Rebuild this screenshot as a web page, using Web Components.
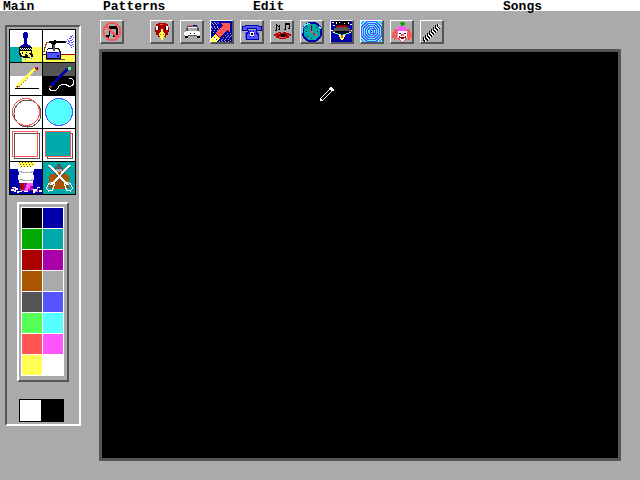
<!DOCTYPE html>
<html lang="en">
<head>
<meta charset="utf-8">
<title>Paint</title>
<style>
html,body{margin:0;height:100%}
body{background:#aaa;font-family:"Liberation Mono","Courier New",monospace;color:#000}
</style>
</head>
<body>
<paint-app></paint-app>
<script>
const tools = {
Brush:`<path fill="#fff" d="M0 0h32v32H0z"/><path fill="#0aa" d="M0 17h14v15H0z"/><path fill="#ff5" d="M13 17h19v15H12v-4z"/>
<path fill="#00a" d="M14 2h3v1h1v5h-1v6h1v1h2v1h1v1H10v-1h1v-1h2v-1h1V8h-1V3h1z"/><path d="M9 17h13v4H9z"/><path stroke="#fff" stroke-dasharray="1 1" d="M10 18.500h11M11 19.500h11"/>
<path fill="#000" d="M9 21h13v3h1v3h-3v1h-7v-1h-3v-2H9z"/><path fill="#ff5" d="M10 21h11v2h-1v2h1v2h-3v-2h-1v-1h-2v2h-3v-1h-1v-2h-1z"/><path d="M12 22h1v2h-1zM16 22h1v1h-1zM19 23h1v1h-1z"/><path fill="#fff" d="M13 28h2v1h-2zM17 29h3v1h-3zM20 27h2v1h-2z"/><path fill="#0aa" d="M15 29h1v1h-1zM21 28h1v1h-1z"/>`,
Airbrush:`<path fill="#fff" d="M0 0h32v32H0z"/><path fill="#ff5" d="M0 25h32v7H0z"/><path fill="#a00" d="M0 24h32v1H0z"/>
<path fill="none" stroke="#a50" d="M6 12.500H3.500V14H2.500v3H1.500v4H0"/><path d="M6 11h17v2H6zM8 13h5v1H8zM9 14h3v5H9zM11 10h2v1h-2z"/>
<path d="M5 18h11v1h1v2h1v8H3v-8h1v-2h1z"/><path fill="#fff" d="M5 19h10v1h1v2H4v-2h1z"/><path fill="#55f" d="M4 22h13v6H4z"/><path fill="#00a" d="M5 22h10v1H5zM14 25h2v2h-2z"/><path fill="#555" d="M10 15h2v6h-2zM3 29h19v1H3z"/>
<path fill="#55f" d="M22 11h2v1h-2zM24 9h1v1h-1zM25 11h2v1h-2zM24 13h2v1h-2zM26 8h2v1h-2zM26 14h1v1h-1zM27 10h2v1h-2zM28 6h1v2h-1zM28 12h2v1h-2zM27 15h2v1h-2zM29 9h1v1h-1zM29 5h1v1h-1zM26 12h1v1h-1zM30 7h1v1h-1zM30 11h1v1h-1zM29 14h1v1h-1zM30 16h1v1h-1zM28 17h1v1h-1zM27 6h1v1h-1zM25 10h1v1h-1z"/>`,
Pencil:`<path fill="#fff" d="M0 0h32v32H0z"/><path fill="#aaa" d="M0 0h32v13H0z"/><path stroke="#a50" stroke-width="2" d="M6.500 24.500l2-2"/><path stroke="#ff5" stroke-width="3" d="M8 23L25 5.500"/><path stroke="#a50" stroke-dasharray="1 2" d="M9 24L26 7"/><path fill="#a00" d="M25 4h3v3h-2V6h-1z"/><path fill="#f5f" d="M26 4h1v1h-1z"/><path d="M5 25h24v1H5z"/>`,
Freehand:`<path d="M0 0h32v32H0z"/><path fill="#555" d="M0 0h32v13H0z"/><path stroke="#a50" stroke-width="2" d="M6.500 24.500l2-2"/><path stroke="#00a" stroke-width="3" d="M8 23L25 5.500"/><path fill="#5f5" d="M25 4h3v3h-3z"/><path fill="#5ff" d="M26 4h1v2h-1zM25 6h1v1h-1z"/><path fill="none" stroke="#fff" d="M6.500 24.500v2l2 1h4l2-2 2-3 3-1h3l2 1 2 1 3-1 1-2v-3l-2-2h-3"/>`,
Circle:`<path fill="#fff" d="M0 0h32v32H0z"/><circle cx="17.500" cy="17.500" r="13.500" fill="none" stroke="#555"/><circle cx="16" cy="16" r="13.500" fill="none" stroke="#f55"/>`,
"Filled circle":`<path fill="#fff" d="M0 0h32v32H0z"/><circle cx="16" cy="16" r="13.500" fill="#5ff" stroke="#55f"/>`,
Rectangle:`<path fill="#fff" d="M0 0h32v32H0z"/><path fill="none" stroke="#555" d="M4.500 4.500h25v25h-25z"/><path fill="none" stroke="#f55" d="M2.500 2.500h25v25h-25z"/>`,
"Filled rectangle":`<path fill="#fff" d="M0 0h32v32H0z"/><path fill="none" stroke="#555" d="M4.500 4.500h25v25h-25z"/><path fill="#0aa" stroke="#f55" d="M2.500 2.500h25v25h-25z"/>`,
Eraser:`<path fill="#fff" d="M0 0h32v7H0z"/><path fill="#00a" d="M0 7h32v25H0z"/><path fill="#ff5" d="M9 0h15v6H9z"/><path stroke="#a50" stroke-dasharray="1 2" d="M9 .5h15M10 2.500h13M11 4.500h11"/><path fill="#fff" d="M8 4h3v1h10V4h3v6h-1v3h1v5h-1v3H9v-3H8v-5h1v-3H8z"/><path stroke="#aaa" fill="none" d="M8 9.500h3v1h10v-1h3M9 17.500h3v1h9v-1h2"/>
<path fill="#f5f" d="M10 21h13v7h-2v1H11v-1h-1z"/><path fill="#a00" d="M10 21h4v7h-3v-1h-1z"/><path fill="#a0a" d="M14 21h3v2h-1v3h-1v2h-1zM20 24h3v3h-2v2h-3v-2h2z"/><path fill="#fff" d="M2 25h4v1H2zM1 27h3v2H1zM5 26h3v2h-2v2H4v-2h1zM7 29h5v1H9v1H7zM14 29h4v1h-4zM23 27h4v2h-2v2h-2zM27 25h3v1h-3zM29 28h3v2h-3z"/><path fill="#f5f" d="M3 26h2v1H3zM25 29h3v1h-3zM27 26h1v2h-1z"/>`,
Cut:`<path fill="#0aa" d="M0 0h32v32H0z"/><path fill="#555" d="M14 2h4v3h2v4h-8V5h2z"/><path fill="#aaa" d="M13 7h6v3h-6z"/><path fill="#a50" d="M13 10h6v2h6v2h1v12h-2v1H8v-1H6V14h1v-2h6z"/>
<path stroke="#555" fill="none" d="M6 5l19 20M27 5L8 25"/><path stroke="#fff" stroke-width="2" fill="none" d="M6 3l19 20M27 3L8 23"/><path stroke="#fff" fill="none" d="M8.500 20l-3 2-2 4 2 3 4-1 2-6-1-2zM24.500 20l3 2 2 4-2 3-4-1-2-6 1-2z"/>`
};
const actions = {
"No music":`<path d="M8 5h8v2h1v7h-1v2h-4v-3h3V8H9v7H8v2H4v-3h4z"/><circle cx="11" cy="10.500" r="8.500" fill="none" stroke="#f55" stroke-width="2"/><path stroke="#f55" stroke-width="2" d="M5 5l12 12"/>`,
Parrot:`<path fill="#a00" d="M7 2h8v1h2v3h1v5h-1v3h-2v2H7v-2H5v-3H4V6h1V3h2z"/><path fill="#fff" d="M5 5h2v4H5zM15 5h2v4h-2z"/><path d="M7 6h1v3H7zM14 6h1v3h-1z"/><path fill="#ff5" d="M10 8h2v3h1v1h1v3h-1v2h-1v2h-2v-2H9v-2H8v-3h1v-1h1z"/><path fill="#a50" d="M9 13h1v1H9zM12 13h1v1h-1z"/><path fill="#f55" d="M9 3h3v1H9z"/>`,
"Police car":`<path fill="#f55" d="M7 4h4v1H7z"/><path fill="#00a" d="M12 4h4v1h-4z"/><path fill="#555" d="M6 5h11v2h1v3H5V7h1z"/><path fill="#fff" d="M7 6h9v1H7zM5 10h13v1h1v3h-1v1H4v-1H3v-3h2z"/><path fill="#aaa" d="M7 7h9v3H7z"/><path d="M4 15h3v2H4zM16 15h3v2h-3zM9 12h1v1H9zM13 12h1v1h-1z"/><path fill="#555" d="M7 14h9v1H7z"/><path fill="#ff5" d="M5 12h1v1H5zM17 12h1v1h-1z"/>`,
Rocket:`<path fill="#00a" d="M0 0h22v22H0z"/><path fill="none" stroke="#aaa" stroke-dasharray="1 2" d="M0 1.500h9M2 3.500h6M0 5.500h9M1 7.500h8M0 9.500h7M2 11.500h4M14 14.500h7M12 16.500h8M11 18.500h9M8 20.500h12M16 12.500h4M1 2.500h7M0 6.500h8M13 15.500h8M10 19.500h10"/><path fill="#000" d="M1 12h3v1H1zM12 15h2v1h-2zM15 19h3v1h-3z"/><path fill="#f55" d="M9 2h10v10l-3-3-7 7-5-4 8-7z"/><path fill="#ff5" d="M4 13l5 4-4 4H0v-4z"/><path fill="none" stroke="#a00" d="M3 16l3 3M5 13l4 4"/><path fill="#fff" d="M3 17h2v2H3z"/>`,
Telephone:`<path fill="#00a" d="M4 4h14v1h3v5h-6V8H7v2H1V5h3z"/><path fill="#55f" d="M4 5h14v1h2v3h-4V7H6v2H2V6h2zM7 9h8v2h3v7H4v-7h3z"/><path fill="none" stroke="#00a" d="M7 8.500v3l-2 2v5h12v-5l-2-2v-3"/><path fill="#fff" d="M9 11h4v4H9z"/><path d="M10 12h2v2h-2z"/><path fill="#00a" d="M9 10h1v1H9zM12 10h1v1h-1zM8 12h1v1H8zM13 12h1v1h-1zM9 15h1v1H9zM12 15h1v1h-1z"/>`,
Singing:`<path d="M5 3h1v1h1v1h1V4h1v5H7V8h1V6H7V5H6v5H4V9h1zM14 2h5v6h-2V7h1V4h-3v5h-2V8h1z"/><path fill="#a00" d="M7 11h3v1h2v-1h3v1h3v1h2v2h-2v2h-3v1H8v-1H5v-2H3v-2h2v-1h2z"/><path fill="#f55" d="M8 16h7v1H8zM7 12h2v1H7zM5 14h1v1H5zM17 14h1v1h-1z"/><path d="M10 13h4v3h-4z"/>`,
Clock:`<circle cx="11" cy="11" r="9.500" fill="#0aa" stroke="#00a" stroke-width="2"/><path fill="none" stroke="#5ff" d="M1.500 12V8l3-4 4-2M18 5l2 3"/><path fill="none" stroke="#a00" d="M10.500 4v7l4 3"/><path fill="#f55" d="M10 10h2v2h-2zM14 13h2v2h-2z"/><path fill="#a00" d="M5 10h1v1H5zM16 10h1v1h-1zM10 17h1v1h-1zM6 6h1v1H6zM15 6h1v1h-1zM6 15h1v1H6z"/>`,
Spaceship:`<path fill="#00a" d="M0 0h22v22H0z"/><path fill="#000" d="M3 0h16v4H3z"/><path fill="#fff" d="M1 1h2v1H1zM5 1h1v2H5zM17 1h1v2h-1zM19 3h2v1h-2zM2 4h2v1H2zM8 1h1v1H8zM13 2h1v1h-1z"/><path fill="#a00" d="M7 4h8v1h2v2H5V5h2z"/><path fill="#555" d="M6 6h10v1h3v2h2v2H1V9h2V7h3z"/><path d="M4 10h14v2h-3v1H7v-1H4z"/><path fill="#fff" d="M0 9h2v1H0zM20 9h1v1h-1zM2 11h2v1H2zM18 11h2v1h-2z"/><path fill="#5ff" d="M4 12h3v1h3v1H7v-1H4zM15 12h3v1h-3v1h-3v-1h3z"/><path fill="#ff5" d="M8 14h6v2h-1v2h-1v1h-2v-1H9v-2H8z"/><path fill="#f55" d="M10 14h2v3h-2z"/>`,
Ripples:`<path fill="#5ff" d="M0 0h22v22H0z"/><g fill="none" stroke="#55f"><path d="M6 .5h9l5.500 5.500v9L15 20.500H6L.5 15V6z"/><path d="M7 2.500h7l4.500 4.500v7L14 18.500H7L2.500 14V7z"/><path d="M8 4.500h5l3.500 3.500v5L13 16.500H8L4.500 13V8z"/><path d="M9 6.500h3l2.500 2.500v3L12 14.500H9L6.500 12V9z"/><path d="M9 8.500h3v4H9zM0 3l3-3M18 0l3 3M0 18l3 3M18 21l3-3"/></g><path fill="#00a" d="M10 10h1v1h-1z"/>`,
Clown:`<path fill="#0a0" d="M10 1h3v1h1v2h-2v1h-2V3H9V2h1z"/><path fill="#f5f" d="M8 5h5v1h2v2h1v2H6V8h1V6h1z"/><path fill="#f55" d="M3 8h3v1h1v4H6v5H4v1H3v-2H1v-5h1v-2h1zM16 8h3v2h1v3h1v4h-2v2h-2v-2h-1v-5h-1V9h1zM7 16h2v2h6v-2h1v3h-2v1H9v-1H7z"/><path stroke="#aaa" stroke-dasharray="1 2" d="M2 10.500h5M1 13.500h4M3 16.500h3M16 10.500h4M17 13.500h3M16 16.500h4"/><path fill="#fff" d="M7 10h9v7h-2v2h-1v1h-3v-1H9v-2H7z"/><path fill="#00a" d="M8 12h2v1H8zM13 12h2v1h-2z"/><path fill="#f55" d="M10 13h3v2h-3z"/><path fill="#a00" d="M8 15h1v1h5v-1h1v2h-2v1h-3v-1H8z"/>`,
Spring:`<path fill="none" stroke="#fff" d="M3 17l2 4M5 15l3 4M7 13l3 4M9 11l3 4M11 9l3 4M13 7l3 4M15 5l3 4M17 3l3 3"/><path fill="none" stroke="#000" d="M2 16v2l2 3M4 14v2l3 4M6 12v2l3 4M8 10v2l3 4M10 8v2l3 4M12 6v2l3 4M14 4v2l3 4M16 3v2l3 3"/>`
};
const svg = (n, body) => `<svg viewBox="0 0 ${n} ${n}" shape-rendering="crispEdges" aria-hidden="true">${body}</svg>`;
function define(name, html, setup){
  const t = document.createElement('template');
  t.innerHTML = html;
  customElements.define(name, class extends HTMLElement{
    connectedCallback(){
      if(this.shadowRoot) return;
      const r = this.attachShadow({mode:'open'});
      r.append(t.content.cloneNode(true));
      if(setup) setup(this, r);
    }
  });
}
define('tool-button', `<style>:host{display:block}button{display:block;width:100%;padding:0;border:0;background:none}svg{display:block;width:100%}</style><button></button>`, (h,r)=>{
  const b=r.querySelector('button'), n=h.getAttribute('name'); b.setAttribute('aria-label',n); b.innerHTML=svg(32,tools[n]);
});
define('action-button', `<style>:host{display:block}button{display:block;box-sizing:border-box;width:24px;height:24px;padding:0;border:solid;border-width:1px 2px 2px 1px;border-color:#fff #555 #555 #fff;background:#aaa}svg{display:block;width:100%}</style><button></button>`, (h,r)=>{
  const b=r.querySelector('button'), n=h.getAttribute('name'); b.setAttribute('aria-label',n); b.innerHTML=svg(21,actions[n]);
});
define('color-swatch', `<style>:host{display:block;height:20px}button{display:block;width:100%;height:100%;padding:0;border:0}</style><button></button>`, (h,r)=>{
  const b=r.querySelector('button'); b.style.background=h.getAttribute('color'); b.setAttribute('aria-label','Colour '+h.getAttribute('color'));
});
define('menu-bar', `<style>:host{display:grid;grid-template-columns:100px 150px 250px 1fr;padding-left:3px;height:11px;background:#fff}</style><slot></slot>`);
define('menu-item', `<style>:host{display:block}button{display:block;padding:0;border:0;background:none;color:inherit;font:bold 13px/13px "Liberation Mono","Courier New",monospace}</style><button><slot></slot></button>`);
define('tool-box', `<style>:host{display:block;box-sizing:border-box;width:76px;padding:2px 3px 2px 2px;border:2px solid;border-color:#555 #fff #fff #555}
.tools{display:grid;grid-template-columns:1fr 1fr;gap:1px;padding:1px;background:#000}</style><div class="tools">${Object.keys(tools).map(n=>`<tool-button name="${n}"></tool-button>`).join('')}</div><slot></slot>`);
const colors=['#000','#00a','#0a0','#0aa','#a00','#a0a','#a50','#aaa','#555','#55f','#5f5','#5ff','#f55','#f5f','#ff5','#fff'];
define('color-palette', `<style>:host{display:block;margin:7px 7px 0 8px;padding:3px 3px 4px 2px;border:2px solid;border-color:#fff #555 #555 #fff}
div{display:grid;grid-template-columns:1fr 1fr;gap:1px;padding:1px;background:#fff}</style><div>${colors.map(c=>`<color-swatch color="${c}"></color-swatch>`).join('')}</div>`);
define('current-colors', `<style>:host{display:grid;grid-template-columns:1fr 1fr;gap:1px;margin:17px 12px 0 10px;padding:1px;height:21px;background:#000}span{background:#fff}</style><span></span>`);
define('action-bar', `<style>:host{display:flex;gap:6px}action-button:first-of-type{margin-right:20px}</style>${Object.keys(actions).map(n=>`<action-button name="${n}"></action-button>`).join('')}`);
define('paint-canvas', `<style>:host{display:block;position:relative;border:3px solid #555;border-radius:1px;background:#000}
svg{position:absolute;left:218px;top:35px;width:14px;height:14px}</style><svg viewBox="0 0 14 14" shape-rendering="crispEdges" aria-hidden="true"><path fill="#fff" d="M10 0h2v1h1v1h1v2h-3V3h-1V2H9V1h1zM0 11h1v1h1v1h1v1H0zM1 10h1v1H1zM2 9h1v1H2zM3 8h1v1H3zM4 7h1v1H4zM5 6h1v1H5zM6 5h1v1H6zM7 4h1v1H7zM8 3h1v1H8zM9 2h1v1H9zM3 12h1v1H3zM4 11h1v1H4zM5 10h1v1H5zM6 9h1v1H6zM7 8h1v1H7zM8 7h1v1H8zM9 6h1v1H9zM10 5h1v1h-1zM11 4h1v1h-1z"/></svg>`);
define('paint-app', `<style>:host{display:flex;flex-direction:column;min-height:100vh}
main{display:flex;flex:1;gap:18px;padding:9px 19px 19px 5px}
tool-box{align-self:flex-start;flex:none;margin-top:5px}
section{display:flex;flex:1;flex-direction:column;gap:5px;min-width:0}
action-bar{padding-left:1px}paint-canvas{flex:1}</style>
<menu-bar><menu-item>Main</menu-item><menu-item>Patterns</menu-item><menu-item>Edit</menu-item><menu-item>Songs</menu-item></menu-bar>
<main><tool-box><color-palette></color-palette><current-colors></current-colors></tool-box><section><action-bar></action-bar><paint-canvas></paint-canvas></section></main>`);
</script>
</body>
</html>
